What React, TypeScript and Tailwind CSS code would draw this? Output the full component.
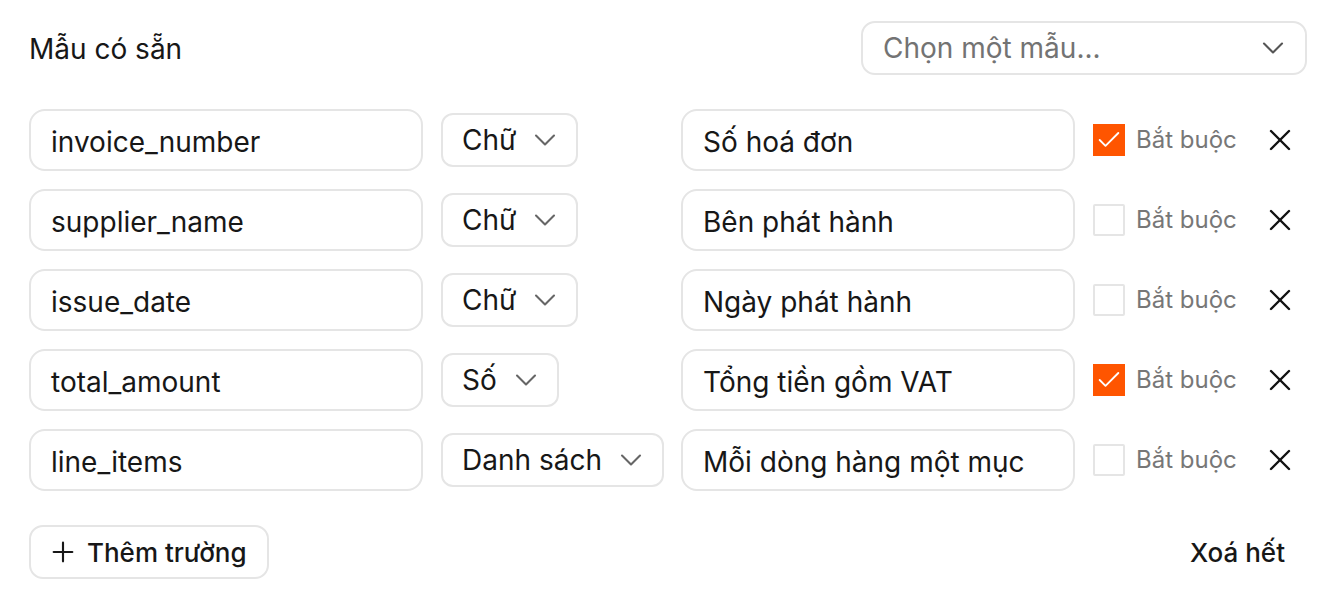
import { Check, ChevronDown, Plus, X } from "lucide-react";

type Field = {
  name: string;
  type: string;
  label: string;
  required: boolean;
};

const fields: Field[] = [
  { name: "invoice_number", type: "Chữ", label: "Số hoá đơn", required: true },
  { name: "supplier_name", type: "Chữ", label: "Bên phát hành", required: false },
  { name: "issue_date", type: "Chữ", label: "Ngày phát hành", required: false },
  { name: "total_amount", type: "Số", label: "Tổng tiền gồm VAT", required: true },
  { name: "line_items", type: "Danh sách", label: "Mỗi dòng hàng một mục", required: false },
];

function FieldRow({ field }: { field: Field }) {
  return (
    <div className="grid h-[62px] grid-cols-[394px_222px_394px_1fr] items-center gap-[18px]">
      <div className="flex h-[62px] items-center rounded-[16px] border-2 border-[#e5e5e5] px-[20px] pt-[4px] text-[28px] text-[#171717]">
        {field.name}
      </div>
      <div className="flex">
        <div className="flex h-[54px] items-center gap-[20px] whitespace-nowrap rounded-[12px] border-2 border-[#e5e5e5] pl-[19px] pr-[22px] text-[28px] text-[#171717]">
          <span>{field.type}</span>
          <ChevronDown size={36} strokeWidth={1.4} className="-mx-[9px] shrink-0 text-[#666]" />
        </div>
      </div>
      <div className="flex h-[62px] items-center rounded-[16px] border-2 border-[#e5e5e5] px-[20px] pt-[4px] text-[28px] text-[#171717]">
        {field.label}
      </div>
      <div className="flex items-center">
        {field.required ? (
          <span className="flex h-[32px] w-[32px] items-center justify-center bg-[#ff5500] text-white">
            <Check size={28} strokeWidth={1.6} />
          </span>
        ) : (
          <span className="h-[32px] w-[32px] rounded-[2px] border-2 border-[#e5e5e5]" />
        )}
        <span className="ml-[11px] text-[24px] text-[#777]">Bắt buộc</span>
        <button className="ml-auto mr-[9px] flex h-[36px] w-[36px] items-center justify-center text-[#111]">
          <X size={36} strokeWidth={1.6} />
        </button>
      </div>
    </div>
  );
}

export default function App() {
  return (
    <div
      className="h-[608px] w-[1336px] bg-white px-[29px] pt-[21px]"
      style={{ fontFamily: "Inter, 'Noto Sans', sans-serif" }}
    >
      <div className="flex items-center justify-between">
        <h2 className="pt-[2px] text-[28px] font-normal text-[#171717]">Mẫu có sẵn</h2>
        <div className="flex h-[54px] w-[446px] items-center justify-between rounded-[14px] border-2 border-[#e5e5e5] pl-[20px] pr-[14px] text-[28px] text-[#737373]">
          <span>Chọn một mẫu...</span>
          <ChevronDown size={36} strokeWidth={1.4} className="text-[#555]" />
        </div>
      </div>

      <div className="mt-[34px] flex flex-col gap-[18px]">
        {fields.map((f) => (
          <FieldRow key={f.name} field={f} />
        ))}
      </div>

      <div className="mt-[34px] flex items-center justify-between">
        <button className="flex h-[54px] items-center gap-[12px] rounded-[14px] border-2 border-[#e5e5e5] pl-[20px] pr-[20px] text-[26px] font-medium text-[#171717]">
          <Plus size={32} strokeWidth={1.6} className="-mx-[4px]" />
          <span>Thêm trường</span>
        </button>
        <button className="px-[22px] text-[26px] font-medium text-[#171717]">Xoá hết</button>
      </div>
    </div>
  );
}
